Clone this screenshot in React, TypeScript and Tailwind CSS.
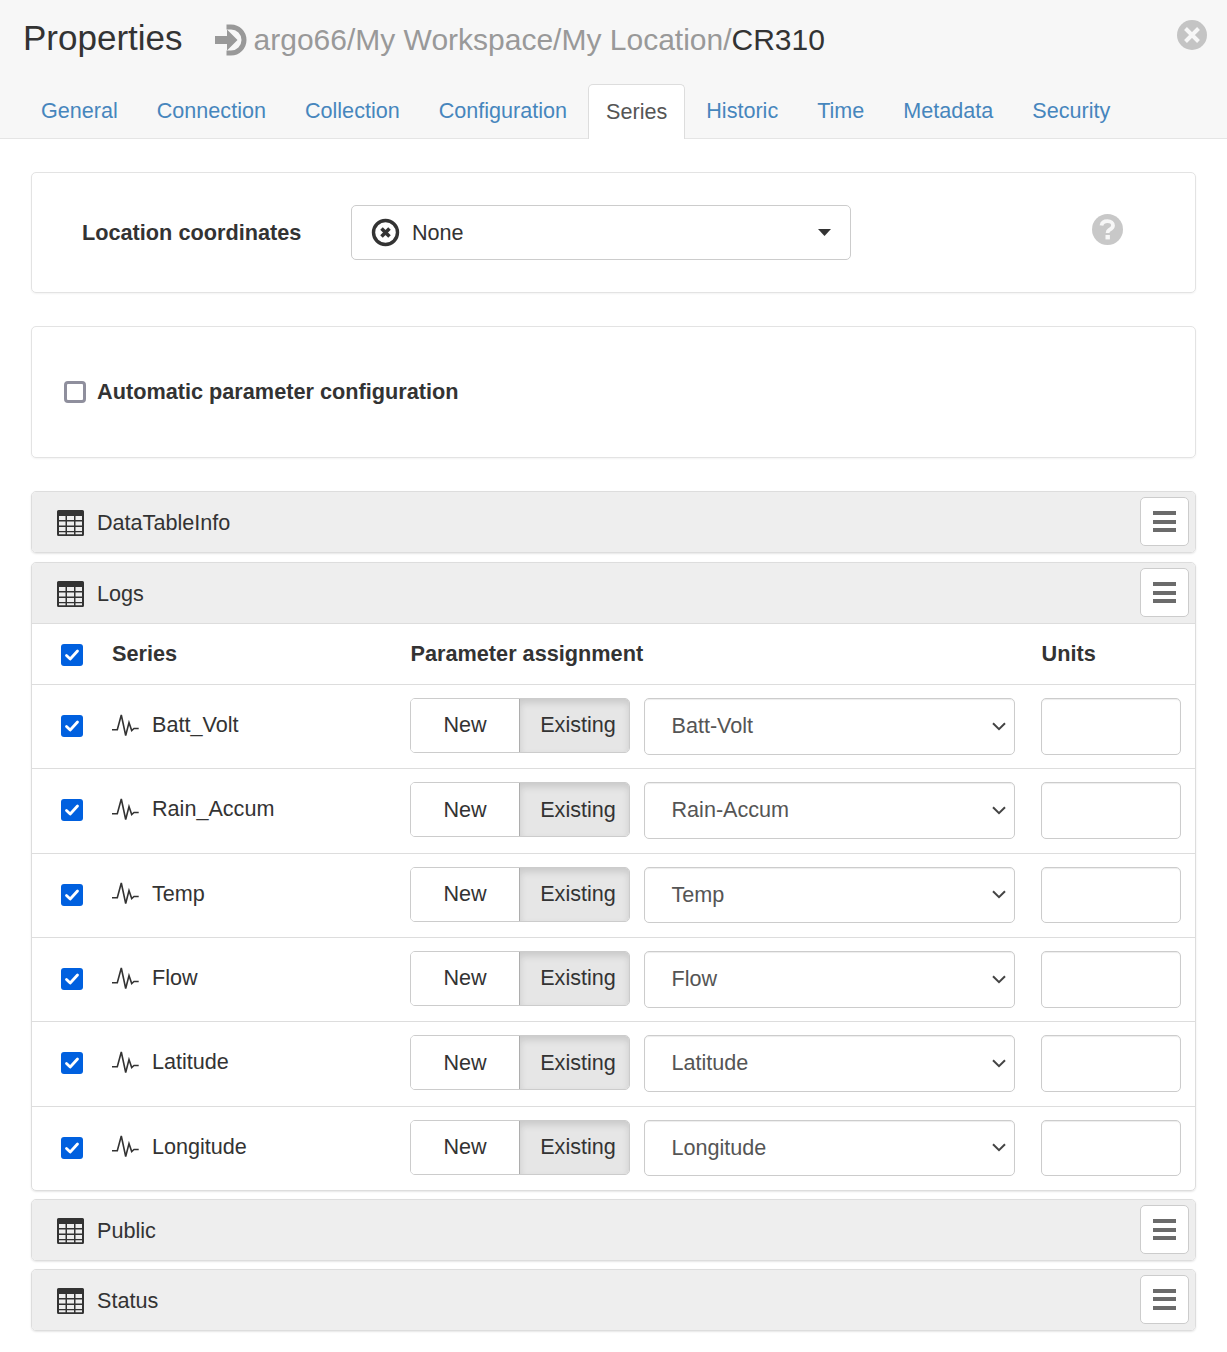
const tabs = ["General", "Connection", "Collection", "Configuration", "Series", "Historic", "Time", "Metadata", "Security"];

const series = [
  { name: "Batt_Volt", param: "Batt-Volt" },
  { name: "Rain_Accum", param: "Rain-Accum" },
  { name: "Temp", param: "Temp" },
  { name: "Flow", param: "Flow" },
  { name: "Latitude", param: "Latitude" },
  { name: "Longitude", param: "Longitude" },
];

function Check() {
  return (
    <div className="flex h-[22px] w-[22px] shrink-0 items-center justify-center rounded-[3px] bg-[#0060df]">
      <svg width="16" height="16" viewBox="0 0 16 16" fill="none">
        <path d="M2.5 8.5 L6.2 12 L13.5 4" stroke="#fff" strokeWidth="2.8" strokeLinecap="round" strokeLinejoin="round" />
      </svg>
    </div>
  );
}

function TableIcon() {
  return (
    <svg width="27" height="26" viewBox="0 0 27 26" className="shrink-0">
      <path
        fillRule="evenodd"
        fill="#333"
        d="M1.5 0h24A1.5 1.5 0 0 1 27 1.5v23a1.5 1.5 0 0 1-1.5 1.5h-24A1.5 1.5 0 0 1 0 24.5v-23A1.5 1.5 0 0 1 1.5 0z
           M2 6v4h6.5V6z M10 6v4h7V6z M18.5 6v4H25V6z
           M2 11.5v4h6.5v-4z M10 11.5v4h7v-4z M18.5 11.5v4H25v-4z
           M2 17v4h6.5v-4z M10 17v4h7v-4z M18.5 17v4H25v-4z
           M2 22.2v2h6.5v-2z M10 22.2v2h7v-2z M18.5 22.2v2H25v-2z"
      />
    </svg>
  );
}

function SignalIcon() {
  return (
    <svg width="27" height="23" viewBox="0 0 27 23" fill="none" className="shrink-0">
      <path d="M0 15.7H5.3L9.3 1L13.7 21.5L17 8.5L19.7 16.5L22 14.5H26.7" stroke="#333" strokeWidth="1.6" />
    </svg>
  );
}

function MenuButton() {
  return (
    <div className="flex h-[49px] w-[49px] flex-col items-center justify-center gap-[4.5px] rounded-[5px] border border-[#ccc] bg-white">
      <div className="h-[4px] w-[23px] bg-[#6b6b6b]" />
      <div className="h-[4px] w-[23px] bg-[#6b6b6b]" />
      <div className="h-[4px] w-[23px] bg-[#6b6b6b]" />
    </div>
  );
}

function PanelHeader({ title, border }: { title: string; border?: boolean }) {
  return (
    <div className={`flex items-start justify-between bg-[#eeeeee] pr-[6px] pl-[25px] pt-[5px] ${border ? "h-[61px] border-b border-[#ddd]" : "h-[60px]"}`}>
      <div className="flex items-center gap-[13px] pt-[10px] text-[#333]">
        <TableIcon />
        <span>{title}</span>
      </div>
      <MenuButton />
    </div>
  );
}

function CollapsedPanel({ title }: { title: string }) {
  return (
    <div className="overflow-hidden rounded-[5px] border border-[#ddd] shadow-[0_1px_2px_rgba(0,0,0,0.1)]">
      <PanelHeader title={title} />
    </div>
  );
}

function SeriesRow({ name, param }: { name: string; param: string }) {
  return (
    <div className="flex h-[84.35px] items-start border-t border-[#ddd] pt-[13px] pl-[29px]">
      <div className="pt-[17px]">
        <Check />
      </div>
      <div className="ml-[29px] flex w-[298px] items-center gap-[13px] pt-[11px] text-[#333]">
        <SignalIcon />
        <span>{name}</span>
      </div>
      <div className="flex h-[55px] w-[220px] overflow-hidden rounded-[5px] border border-[#ccc]">
        <div className="flex w-[108px] items-center justify-center bg-white text-[#333]">New</div>
        <div className="flex flex-1 items-center justify-center border-l border-[#adadad] bg-[#e6e6e6] pl-[7px] text-[#333] shadow-[inset_0_4px_7px_rgba(0,0,0,0.125)]">
          Existing
        </div>
      </div>
      <div className="ml-[14px] flex h-[56.5px] w-[371px] items-center justify-between rounded-[5px] border border-[#ccc] bg-white pr-[8px] pl-[26.5px] text-[#555] shadow-[inset_0_1px_1px_rgba(0,0,0,0.075)]">
        <span>{param}</span>
        <svg width="14" height="9" viewBox="0 0 14 9" fill="none">
          <path d="M1 1.2 L7 7.2 L13 1.2" stroke="#444" strokeWidth="2" />
        </svg>
      </div>
      <div className="ml-[26px] h-[56.5px] w-[140px] rounded-[5px] border border-[#ccc] bg-white shadow-[inset_0_1px_1px_rgba(0,0,0,0.075)]" />
    </div>
  );
}

export default function App() {
  return (
    <div className="h-[1352px] w-[1227px] bg-white font-['Liberation_Sans',Arial,sans-serif] text-[21.6px] text-[#333]">
      {/* Header */}
      <div className="h-[139px] border-b border-[#e5e5e5] bg-[#f7f7f7]">
        <div className="flex h-[84px] items-start pr-[20px] pl-[23px]">
          <span className="mt-[16px] text-[35px] leading-[44px] text-[#333]">Properties</span>
          <svg width="32" height="32" viewBox="0 0 32 32" fill="none" className="mt-[24px] ml-[32px] shrink-0">
            <path d="M11.5 3 H16 A13 13 0 0 1 16 29 H11.5" stroke="#999" strokeWidth="5" />
            <path d="M0 12h12V5.5L22.5 16 12 26.5V20H0z" fill="#999" />
          </svg>
          <span className="mt-[19px] ml-[7px] text-[30px] leading-[42px] text-[#999]">
            argo66/My Workspace/My Location/<span className="text-[#333]">CR310</span>
          </span>
          <div className="mt-[20px] ml-auto flex h-[30px] w-[30px] items-center justify-center rounded-full bg-[#c4c4c4]">
            <svg width="18" height="18" viewBox="0 0 18 18" fill="none">
              <path d="M2.5 2.5 L15.5 15.5 M15.5 2.5 L2.5 15.5" stroke="#f7f7f7" strokeWidth="4" />
            </svg>
          </div>
        </div>
        <div className="flex h-[55px] items-end gap-[3px] pl-[23px] text-[21.58px]">
          {tabs.map((t) =>
            t === "Series" ? (
              <div key={t} className="flex h-[55px] items-center rounded-t-[5px] border border-b-0 border-[#ddd] bg-white px-[17px] text-[#555]">
                {t}
              </div>
            ) : (
              <div key={t} className="flex h-[55px] items-center px-[18px] text-[#337ab7] opacity-90">
                {t}
              </div>
            )
          )}
        </div>
      </div>

      <div className="flex flex-col px-[31px] pt-[33px]">
        {/* Location coordinates */}
        <div className="flex h-[121px] items-start rounded-[5px] border border-[#e3e3e3] pt-[32px] pl-[50px] shadow-[0_1px_2px_rgba(0,0,0,0.05)]">
          <span className="w-[269px] pt-[12px] text-[21.7px] font-bold">Location coordinates</span>
          <div className="flex h-[55px] w-[500px] items-center rounded-[5px] border border-[#ccc] pr-[19px] pl-[19px]">
            <svg width="29" height="29" viewBox="0 0 29 29" fill="none" className="shrink-0">
              <circle cx="14.5" cy="14.5" r="12" stroke="#333" strokeWidth="3.4" />
              <path d="M10.5 10.5 L18.5 18.5 M18.5 10.5 L10.5 18.5" stroke="#333" strokeWidth="3.6" />
            </svg>
            <span className="mt-[1px] ml-[12px]">None</span>
            <svg width="13" height="7" viewBox="0 0 13 7" className="ml-auto">
              <path d="M0 0H13L6.5 7z" fill="#333" />
            </svg>
          </div>
          <div className="mt-[9px] ml-[241px] flex h-[31px] w-[31px] items-center justify-center rounded-full bg-[#c8c8c8]">
            <svg width="17" height="21" viewBox="0 0 17 21" fill="none">
              <path d="M2.5 6.5 C3 3.5 5.5 2.2 8.5 2.2 C12 2.2 14 4 14 6.5 C14 9 12 10 10.2 11 C9 11.7 8.6 12.3 8.6 14" stroke="#f7f7f7" strokeWidth="3.8" />
              <rect x="6.5" y="16" width="4.4" height="4.4" fill="#f7f7f7" />
            </svg>
          </div>
        </div>

        {/* Automatic parameter configuration */}
        <div className="mt-[33px] flex h-[132px] items-start gap-[11px] rounded-[5px] border border-[#e3e3e3] pt-[49px] pl-[32px] shadow-[0_1px_2px_rgba(0,0,0,0.05)]">
          <div className="mt-[5px] h-[22px] w-[22px] rounded-[4px] border-[3px] border-[#8f8f9d] bg-white" />
          <span className="text-[21.7px] font-bold">Automatic parameter configuration</span>
        </div>

        {/* Tables */}
        <div className="mt-[33px]">
          <CollapsedPanel title="DataTableInfo" />
        </div>

        <div className="mt-[9px] overflow-hidden rounded-[5px] border border-[#ddd] shadow-[0_1px_2px_rgba(0,0,0,0.1)]">
          <PanelHeader title="Logs" border />
          <div className="flex h-[60px] items-center pl-[29px] text-[21.7px] font-bold">
            <div className="pt-[2px]">
              <Check />
            </div>
            <span className="ml-[29px] w-[298.5px]">Series</span>
            <span className="w-[631px]">Parameter assignment</span>
            <span>Units</span>
          </div>
          {series.map((s) => (
            <SeriesRow key={s.name} name={s.name} param={s.param} />
          ))}
        </div>

        <div className="mt-[8px]">
          <CollapsedPanel title="Public" />
        </div>
        <div className="mt-[7.5px]">
          <CollapsedPanel title="Status" />
        </div>
      </div>
    </div>
  );
}
